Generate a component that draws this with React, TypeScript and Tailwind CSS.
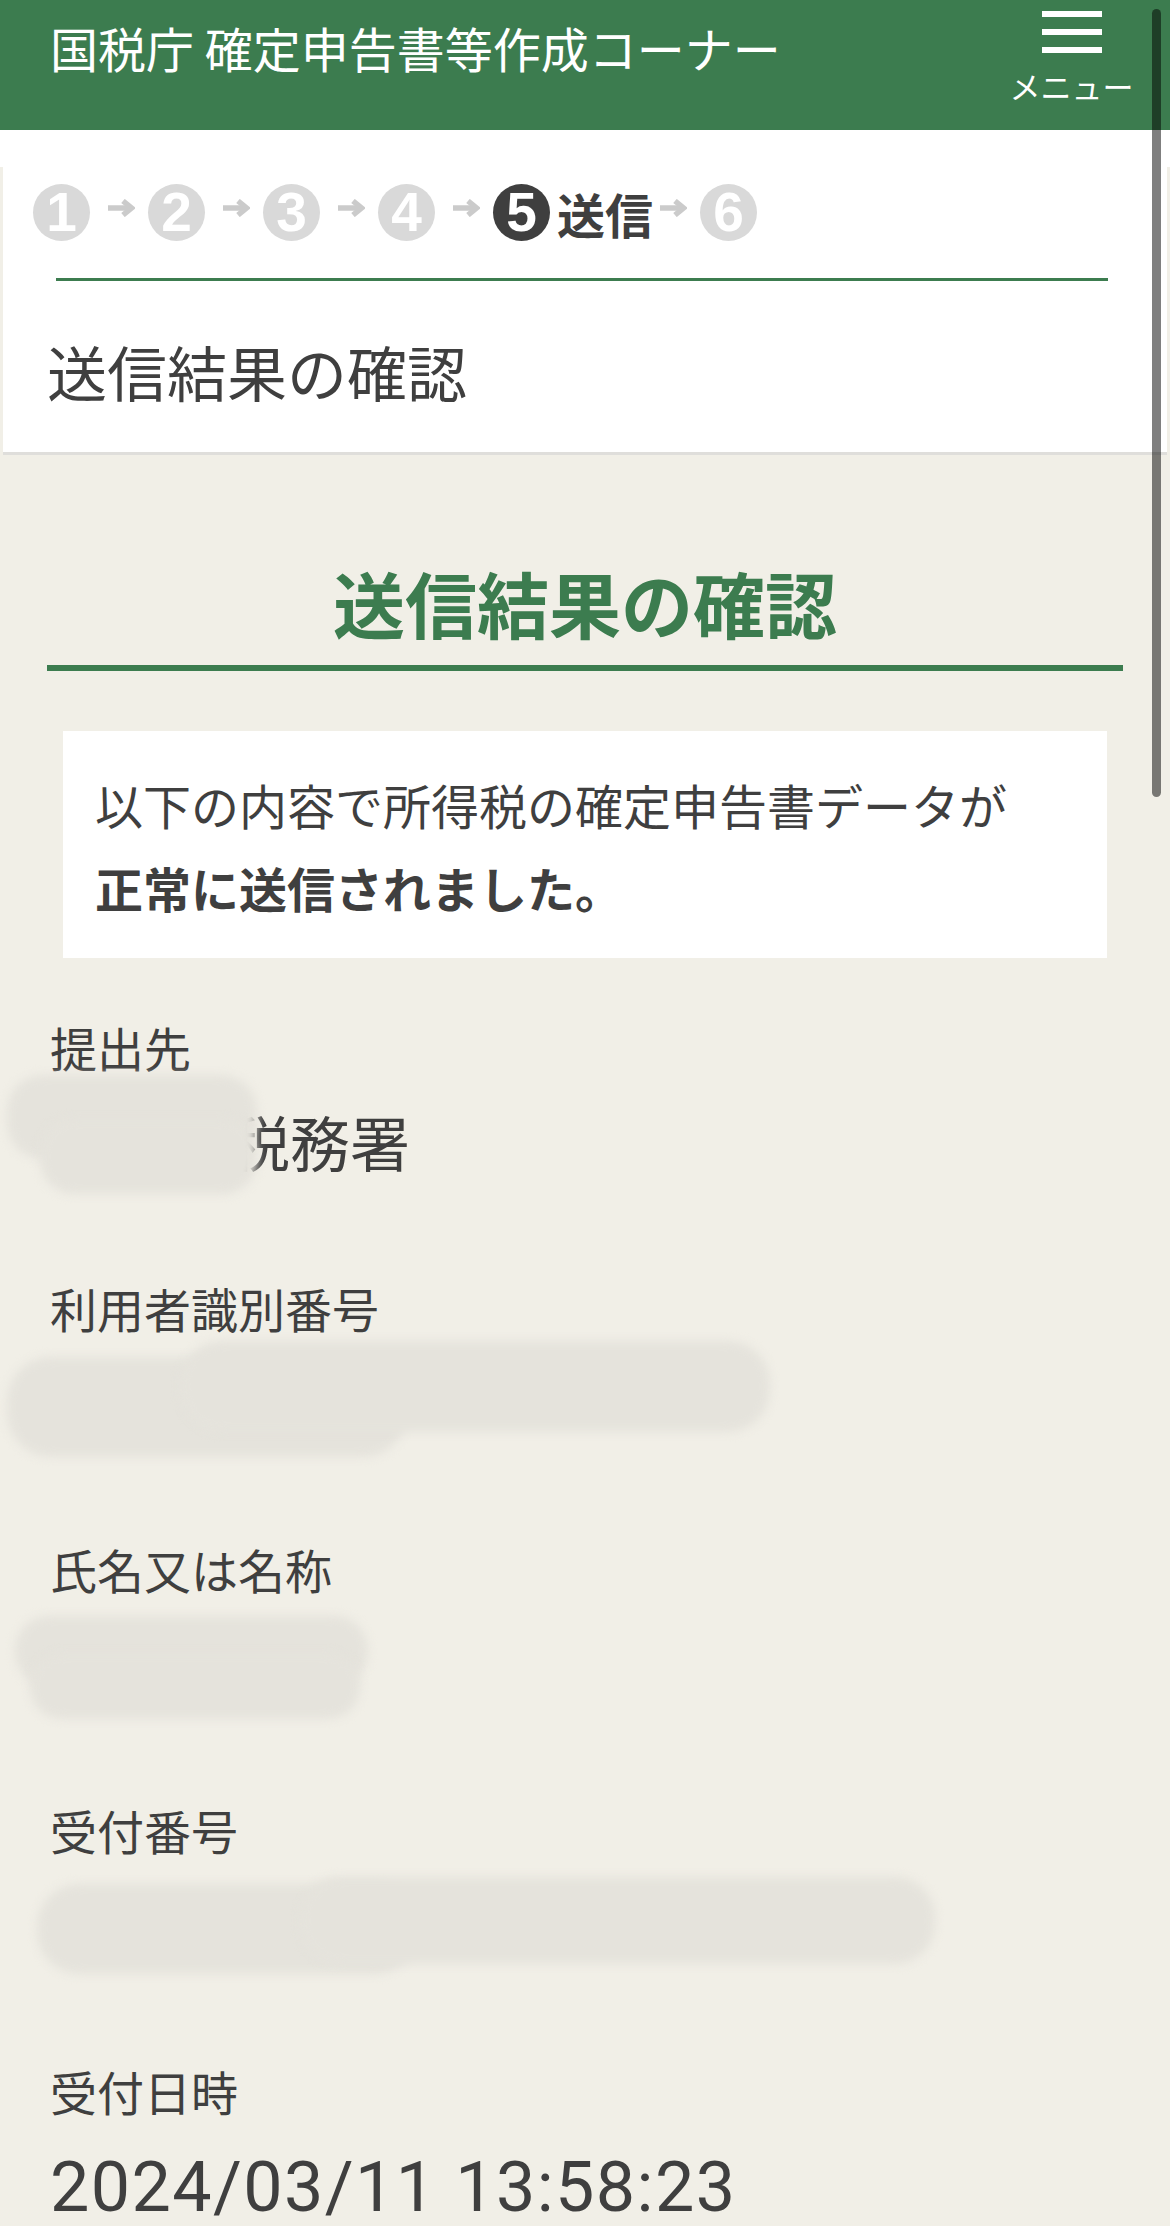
import React from "react";

const GREEN = "bg-[#3c7c4f]";

function Arrow({ className = "" }: { className?: string }) {
  return (
    <svg width="28" height="18" viewBox="0 0 28 18" className={className}>
      <path d="M1 9H23" stroke="#cbcbcb" strokeWidth="5.5" fill="none" />
      <path d="M16 2L24.5 9L16 16" stroke="#cbcbcb" strokeWidth="5.5" fill="none" />
    </svg>
  );
}

function Step({ n, active = false }: { n: number; active?: boolean }) {
  return (
    <div
      className={`flex h-[57px] w-[57px] shrink-0 items-center justify-center rounded-full ${
        active ? "bg-[#3f3f3f]" : "bg-[#d9d9d9]"
      }`}
    >
      <span className="font-['Liberation_Sans',sans-serif] text-[55px] font-bold leading-none text-white">
        {n}
      </span>
    </div>
  );
}

// redacted value: a soft grey smear lying over the text
function Blob({ className }: { className: string }) {
  return <div className={`absolute bg-[#e5e3dc] blur-[5px] ${className}`} />;
}

function Field({
  label,
  children,
  blobs,
  first = false,
}: {
  label: string;
  children?: React.ReactNode;
  blobs?: React.ReactNode;
  first?: boolean;
}) {
  return (
    <div className={first ? "mt-[65px]" : "mt-[113px]"}>
      <div className="pl-[50px] text-[47px] leading-none">{label}</div>
      <div className="relative mt-[41px] h-[60px] pl-[50px] text-[60px] leading-none">
        {children}
        {blobs}
      </div>
    </div>
  );
}

export default function App() {
  return (
    <div className="relative h-[2226px] overflow-hidden bg-[#f1efe7] font-['Noto_Sans_CJK_JP',sans-serif] text-[#3f3f3f]">
      {/* header */}
      <header className={`flex h-[130px] justify-between pl-[50px] pr-[35px] ${GREEN}`}>
        <h1 className="pt-[23px] text-[48px] leading-none text-white">国税庁 確定申告書等作成コーナー</h1>
        <button className="flex w-[127px] flex-col items-center pt-[11px] text-white">
          <span className="block h-[6px] w-[60px] bg-white" />
          <span className="mt-[12px] block h-[6px] w-[60px] bg-white" />
          <span className="mt-[12px] block h-[6px] w-[60px] bg-white" />
          <span className="mt-[17px] text-[31px] leading-none">メニュー</span>
        </button>
      </header>

      <div className="h-[37px] bg-white" />

      {/* step panel */}
      <div className="mx-[3px] border-b-[3px] border-[#dfdedb] bg-white">
        <div className="flex items-center pl-[30px] pt-[17px]">
          <Step n={1} />
          <Arrow className="ml-[17px] mr-[13px] self-start mt-[15px]" />
          <Step n={2} />
          <Arrow className="ml-[17px] mr-[13px] self-start mt-[15px]" />
          <Step n={3} />
          <Arrow className="ml-[17px] mr-[13px] self-start mt-[15px]" />
          <Step n={4} />
          <Arrow className="ml-[17px] mr-[13px] self-start mt-[15px]" />
          <Step n={5} active />
          <span className="ml-[7px] text-[48px] font-bold leading-none text-[#3f3f3f]">送信</span>
          <Arrow className="ml-[6px] mr-[13px] self-start mt-[15px]" />
          <Step n={6} />
        </div>
        <div className="ml-[53px] mr-[59px] mt-[37px] h-[3px] bg-[#3c7c4f]" />
        <h2 className="pb-[51px] pl-[44px] pt-[60px] text-[60px] font-normal leading-none">送信結果の確認</h2>
      </div>

      {/* result */}
      <h2 className="mx-[47px] mt-[111px] border-b-[6px] border-[#3c7c4f] pb-[27px] text-center text-[72px] font-bold leading-none text-[#3c7c4f]">
        送信結果の確認
      </h2>

      <div className="mx-[63px] mt-[60px] bg-white pb-[29px] pl-[32px] pt-[32px] text-[48px] leading-[83px]">
        <p>以下の内容で所得税の確定申告書データが</p>
        <p className="font-bold">正常に送信されました。</p>
      </div>

      <Field
        first
        label="提出先"
        blobs={
          <>
            <Blob className="left-[7px] top-[-36px] h-[84px] w-[250px] rounded-[36px]" />
            <Blob className="left-[40px] top-[8px] h-[75px] w-[217px] rounded-[34px]" />
          </>
        }
      >
        <span className="pl-[180px]">税務署</span>
      </Field>

      <Field
        label="利用者識別番号"
        blobs={
          <>
            <Blob className="left-[7px] top-[-15px] h-[100px] w-[400px] rounded-[44px]" />
            <Blob className="left-[180px] top-[-31px] h-[91px] w-[590px] rounded-[42px]" />
          </>
        }
      />

      <Field
        label="氏名又は名称"
        blobs={
          <>
            <Blob className="left-[15px] top-[-17px] h-[70px] w-[353px] rounded-[34px]" />
            <Blob className="left-[30px] top-[20px] h-[66px] w-[330px] rounded-[32px]" />
          </>
        }
      />

      <Field
        label="受付番号"
        blobs={
          <>
            <Blob className="left-[37px] top-[-10px] h-[90px] w-[380px] rounded-[42px]" />
            <Blob className="left-[300px] top-[-17px] h-[87px] w-[635px] rounded-[40px]" />
          </>
        }
      />

      <div className="mt-[113px]">
        <div className="pl-[50px] text-[47px] leading-none">受付日時</div>
        <div className="mt-[38px] pl-[50px] font-['Roboto',sans-serif] text-[70px] leading-none tracking-[1.4px]">
          2024/03/11 13:58:23
        </div>
      </div>

      {/* scroll indicator */}
      <div className="absolute right-[9px] top-[9px] h-[788px] w-[9px] rounded-full bg-black/50" />
    </div>
  );
}
